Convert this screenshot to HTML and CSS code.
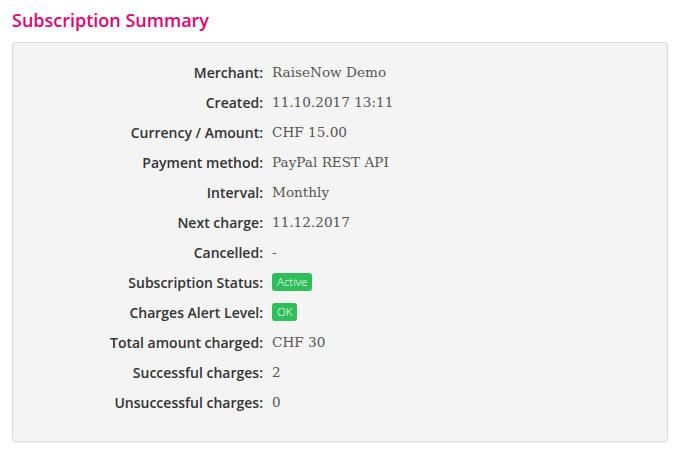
FILE: index.html
```html
<!DOCTYPE html>
<html lang="en">
<head>
  <meta charset="UTF-8" />
  <title>Subscription Summary</title>
  <link rel="stylesheet" href="styles.css">
</head>
<body>
  <div class="page">
    <h2 class="title">Subscription Summary</h2>

    <div class="summary">
      <dl class="details">
        <dt>Merchant:</dt><dd>RaiseNow Demo</dd>
        <dt>Created:</dt><dd>11.10.2017 13:11</dd>
        <dt>Currency / Amount:</dt><dd>CHF 15.00</dd>
        <dt>Payment method:</dt><dd>PayPal REST API</dd>
        <dt>Interval:</dt><dd>Monthly</dd>
        <dt>Next charge:</dt><dd>11.12.2017</dd>
        <dt>Cancelled:</dt><dd>-</dd>
        <dt>Subscription Status:</dt><dd><span class="badge">Active</span></dd>
        <dt>Charges Alert Level:</dt><dd><span class="badge">OK</span></dd>
        <dt>Total amount charged:</dt><dd>CHF 30</dd>
        <dt>Successful charges:</dt><dd>2</dd>
        <dt>Unsuccessful charges:</dt><dd>0</dd>
      </dl>
    </div>
  </div>
</body>
</html>
```

FILE: styles.css
```css
html, body {
  margin: 0; padding: 0;
  background: #fff;
  font-family: "Open Sans", sans-serif;
  color: #333;
}
.page {
  padding: 8px 14px 10px 12px;
}
.title {
  margin: 0 0 10px;
  font-size: 18px;
  font-weight: 600;
  line-height: 24px;
  color: #e6006e;
}
.summary {
  background-color: #f4f4f4;
  border: 1px solid #dcdcdc;
  border-radius: 3px;
  box-shadow: 0 1px 1px rgba(0,0,0,0.05);
  padding: 14px 0 24px;
}
.details {
  display: grid;
  grid-template-columns: 250px 1fr;
  column-gap: 9px;
  margin: 0;
}
.details dt,
.details dd {
  margin: 0;
  height: 30px;
  display: flex;
  align-items: center;
}
.details dt {
  justify-content: flex-end;
  font-size: 14px;
  font-weight: 600;
  color: #333;
}
.details dd {
  font-family: "DejaVu Serif", serif;
  font-size: 13.6px;
  font-weight: 300;
  color: #555;
}
.badge {
  display: inline-block;
  background-color: #2fbf5a;
  color: #fff;
  font-family: "Open Sans", sans-serif;
  font-size: 11.5px;
  line-height: 18px;
  padding: 0 5px;
  border-radius: 3px;
}
```
